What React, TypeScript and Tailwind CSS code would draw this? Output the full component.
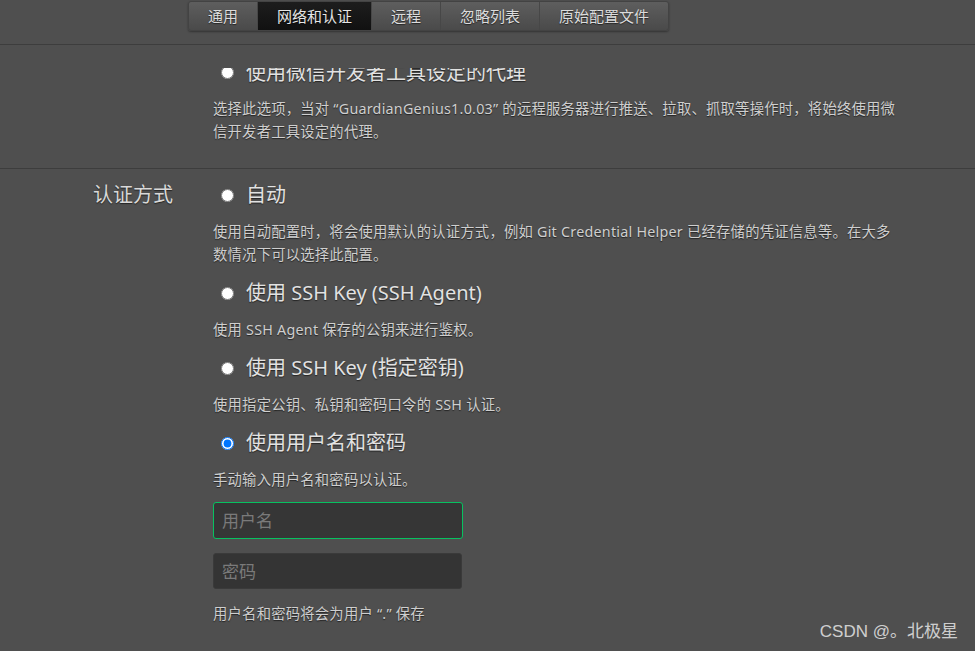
import React, { useState } from 'react';

const tabs = ['通用', '网络和认证', '远程', '忽略列表', '原始配置文件'];

const shadow = '[text-shadow:0_1px_1px_rgba(0,0,0,0.55)]';
const desc = `text-[14.3px] tracking-[0.25px] leading-[23px] text-[#cfcfcf] ${shadow}`;

interface OptionProps {
  label: string;
  lines: string[];
  checked: boolean;
  onSelect: () => void;
}

const Option: React.FC<OptionProps> = ({ label, lines, checked, onSelect }) => (
  <div className="mb-[12px]">
    <label className="flex items-center h-[30px] pl-[8px] cursor-pointer">
      <input
        type="radio"
        name="auth"
        checked={checked}
        onChange={onSelect}
        className="m-0 w-[13px] h-[13px] shrink-0"
      />
      <span className={`ml-[12px] text-[20px] leading-[30px] text-[#e2e2e2] whitespace-nowrap ${shadow}`}>
        {label}
      </span>
    </label>
    <div className={`mt-[10px] ${desc}`}>
      {lines.map(l => (
        <div key={l} className="whitespace-nowrap">{l}</div>
      ))}
    </div>
  </div>
);

export default function App() {
  const [auth, setAuth] = useState('password');
  const [active, setActive] = useState(1);

  const options = [
    {
      id: 'auto',
      label: '自动',
      lines: [
        '使用自动配置时，将会使用默认的认证方式，例如 Git Credential Helper 已经存储的凭证信息等。在大多',
        '数情况下可以选择此配置。',
      ],
    },
    { id: 'agent', label: '使用 SSH Key (SSH Agent)', lines: ['使用 SSH Agent 保存的公钥来进行鉴权。'] },
    { id: 'key', label: '使用 SSH Key (指定密钥)', lines: ['使用指定公钥、私钥和密码口令的 SSH 认证。'] },
    { id: 'password', label: '使用用户名和密码', lines: ['手动输入用户名和密码以认证。'] },
  ];

  return (
    <div
      className="relative w-[975px] h-[651px] overflow-hidden bg-[#4f4f4f]"
      style={{ fontFamily: '"Noto Sans", "Noto Sans CJK SC", sans-serif' }}
    >
      {/* header with tabs */}
      <div className="h-[68px]">
        <div className="h-[45px] border-b border-[#3d3d3d] pt-[1px]">
          <div className="ml-[188px] inline-flex h-[30px] rounded-[3px] border border-[#434343] bg-gradient-to-b from-[#5e5e5e] to-[#4a4a4a] shadow-[0_1px_2px_rgba(0,0,0,0.35)] overflow-hidden">
            {tabs.map((t, i) => (
              <button
                key={t}
                onClick={() => setActive(i)}
                className={`h-full px-[19px] text-[15px] leading-[28px] whitespace-nowrap border-r border-[#474747] last:border-r-0 ${shadow} ${
                  active === i
                    ? 'bg-gradient-to-b from-[#1d1d1d] to-[#111111] text-[#e6e6e6]'
                    : 'text-[#dcdcdc]'
                }`}
              >
                {t}
              </button>
            ))}
          </div>
        </div>
      </div>

      {/* scrolled content */}
      <div className="h-[583px] overflow-hidden">
        <div className="-mt-[10px]">
          {/* proxy section */}
          <div className="border-b border-[#3d3d3d] pb-[25px] pl-[213px]">
            <label className="flex items-center h-[30px] pl-[8px]">
              <input type="radio" name="proxy" defaultChecked={false} className="m-0 -mt-[2px] w-[13px] h-[13px]" />
              <span className={`ml-[12px] text-[20px] leading-[30px] text-[#e2e2e2] whitespace-nowrap ${shadow}`}>
                使用微信开发者工具设定的代理
              </span>
            </label>
            <div className={`mt-[9px] ${desc}`}>
              <div className="whitespace-nowrap">
                选择此选项，当对 “GuardianGenius1.0.03” 的远程服务器进行推送、拉取、抓取等操作时，将始终使用微
              </div>
              <div className="whitespace-nowrap">信开发者工具设定的代理。</div>
            </div>
          </div>

          {/* auth section */}
          <div className="flex pt-[11px]">
            <div className={`w-[173px] shrink-0 text-right text-[20px] leading-[30px] text-[#d9d9d9] ${shadow}`}>
              认证方式
            </div>
            <div className="ml-[40px] flex flex-col">
              {options.map(o => (
                <Option
                  key={o.id}
                  label={o.label}
                  lines={o.lines}
                  checked={auth === o.id}
                  onSelect={() => setAuth(o.id)}
                />
              ))}
              <input
                placeholder="用户名"
                className="-mt-[1px] w-[250px] h-[37px] rounded-[3px] border border-[#07c160] bg-[#363636] px-[8px] text-[17px] text-[#dddddd] placeholder:text-[#7a7a7a] outline-none"
              />
              <input
                type="password"
                placeholder="密码"
                className="mt-[14px] w-[249px] h-[36px] rounded-[3px] border border-[#3a3a3a] bg-[#343434] px-[8px] text-[17px] text-[#dddddd] placeholder:text-[#7a7a7a] outline-none"
              />
              <div className={`mt-[13px] whitespace-nowrap ${desc}`}>
                用户名和密码将会为用户 “.” 保存
              </div>
            </div>
          </div>
        </div>
      </div>

      {/* watermark */}
      <div
        className="absolute right-[17px] bottom-[8px] text-[17px] leading-[22px] text-[#e0e0e0]/90"
        style={{ fontFamily: '"Liberation Sans", "Noto Sans CJK SC", sans-serif' }}
      >
        CSDN @。北极星
      </div>
    </div>
  );
}
